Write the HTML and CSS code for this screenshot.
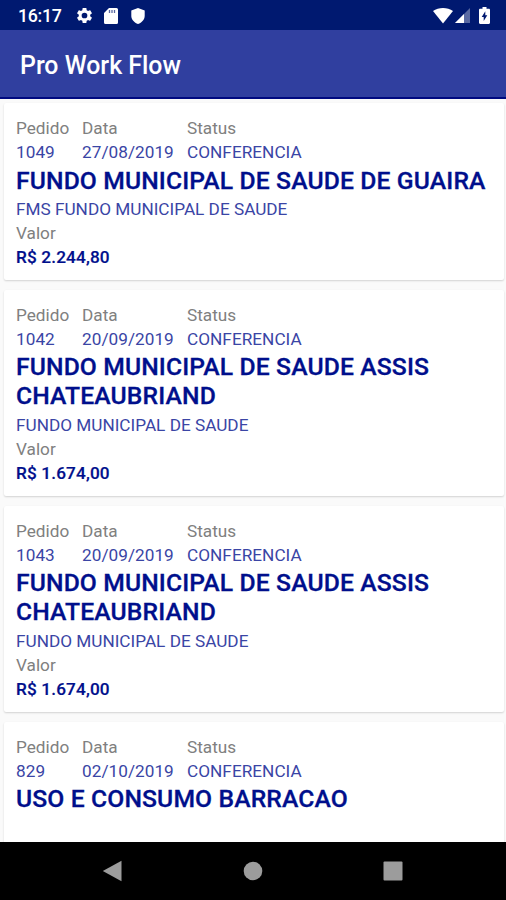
FILE: index.html
```html
<!DOCTYPE html>
<html lang="pt-BR">
<head>
    <meta charset="UTF-8">
    <meta name="viewport" content="width=device-width, initial-scale=1.0">
    <title>Pro Work Flow</title>
    <link rel="stylesheet" href="styles.css">
</head>
<body>

<!-- Status bar -->
<div class="status-bar">
    <span class="clock">16:17</span>
    <svg class="icon-gear" width="19" height="19" viewBox="0 0 24 24"><path fill="#fff" d="M19.14 12.94c.04-.3.06-.61.06-.94s-.02-.64-.07-.94l2.03-1.58c.18-.14.23-.41.12-.61l-1.92-3.32c-.12-.22-.37-.29-.59-.22l-2.39.96c-.5-.38-1.03-.7-1.62-.94l-.36-2.54c-.04-.24-.24-.41-.48-.41h-3.84c-.24 0-.43.17-.47.41l-.36 2.54c-.59.24-1.13.57-1.62.94l-2.39-.96c-.22-.08-.47 0-.59.22L2.74 8.87c-.12.21-.08.47.12.61l2.03 1.58c-.05.3-.09.63-.09.94s.02.64.07.94l-2.03 1.58c-.18.14-.23.41-.12.61l1.92 3.32c.12.22.37.29.59.22l2.39-.96c.5.38 1.03.7 1.62.94l.36 2.54c.05.24.24.41.48.41h3.84c.24 0 .44-.17.47-.41l.36-2.54c.59-.24 1.13-.56 1.62-.94l2.39.96c.22.08.47 0 .59-.22l1.92-3.32c.12-.22.07-.47-.12-.61zM12 15.6A3.6 3.6 0 1 1 12 8.4a3.6 3.6 0 0 1 0 7.2z"/></svg>
    <svg class="icon-sd" width="14" height="16" viewBox="0 0 14 16"><path fill="#fff" d="M5 0h7.500A1.500 1.500 0 0 1 14 1.500v13a1.500 1.500 0 0 1-1.500 1.500h-11A1.500 1.500 0 0 1 0 14.500V5z"/><path stroke="#001970" stroke-opacity=".65" stroke-width="1.300" d="M5.500 2v3M8 2v3M10.500 2v3"/></svg>
    <svg class="icon-shield" width="14" height="16" viewBox="0 0 14 16"><path fill="#fff" d="M7 0l6.700 2.500v5.200c0 3.800-2.900 7-6.700 8.300-3.800-1.300-6.700-4.500-6.700-8.300V2.500z"/></svg>
    <div class="status-right">
        <svg width="20" height="16" viewBox="0 0 20 16"><path fill="#fff" d="M10 15.500L0 3C5.500-1 14.500-1 20 3z"/></svg>
        <svg class="icon-signal" width="15" height="15" viewBox="0 0 15 15"><path fill="#fff" fill-opacity=".35" d="M15 0v15H0z"/><path fill="#fff" d="M9 6v9H0z"/></svg>
        <svg class="icon-battery" width="11" height="17" viewBox="0 0 11 17"><path fill="#fff" d="M3.500 0h4v1.700h2.300c.7 0 1.200.5 1.200 1.200v12.900c0 .7-.5 1.200-1.200 1.200H1.200C.5 17 0 16.500 0 15.800V2.900c0-.7.500-1.200 1.200-1.200h2.300z"/><path fill="#001970" d="M6.300 4.300v4h2L4.700 14V10h-2z"/></svg>
    </div>
</div>

<header>
    <h1>Pro Work Flow</h1>
</header>

<main>
    <div class="card">
        <div class="info">
            <div class="col-pedido"><label>Pedido</label><span>1049</span></div>
            <div class="col-data"><label>Data</label><span>27/08/2019</span></div>
            <div class="col-status"><label>Status</label><span>CONFERENCIA</span></div>
        </div>
        <h2>FUNDO MUNICIPAL DE SAUDE DE GUAIRA</h2>
        <p class="client">FMS FUNDO MUNICIPAL DE SAUDE</p>
        <label>Valor</label>
        <p class="price">R$ 2.244,80</p>
    </div>

    <div class="card">
        <div class="info">
            <div class="col-pedido"><label>Pedido</label><span>1042</span></div>
            <div class="col-data"><label>Data</label><span>20/09/2019</span></div>
            <div class="col-status"><label>Status</label><span>CONFERENCIA</span></div>
        </div>
        <h2>FUNDO MUNICIPAL DE SAUDE ASSIS CHATEAUBRIAND</h2>
        <p class="client">FUNDO MUNICIPAL DE SAUDE</p>
        <label>Valor</label>
        <p class="price">R$ 1.674,00</p>
    </div>

    <div class="card">
        <div class="info">
            <div class="col-pedido"><label>Pedido</label><span>1043</span></div>
            <div class="col-data"><label>Data</label><span>20/09/2019</span></div>
            <div class="col-status"><label>Status</label><span>CONFERENCIA</span></div>
        </div>
        <h2>FUNDO MUNICIPAL DE SAUDE ASSIS CHATEAUBRIAND</h2>
        <p class="client">FUNDO MUNICIPAL DE SAUDE</p>
        <label>Valor</label>
        <p class="price">R$ 1.674,00</p>
    </div>

    <div class="card card-last">
        <div class="info">
            <div class="col-pedido"><label>Pedido</label><span>829</span></div>
            <div class="col-data"><label>Data</label><span>02/10/2019</span></div>
            <div class="col-status"><label>Status</label><span>CONFERENCIA</span></div>
        </div>
        <h2>USO E CONSUMO BARRACAO</h2>
    </div>
</main>

<!-- Navigation buttons -->
<nav>
    <svg width="20" height="22" viewBox="0 0 20 22"><path fill="#9c9c9c" d="M19.500 .8v20.400L.8 11z"/></svg>
    <svg width="20" height="20" viewBox="0 0 20 20"><circle cx="10" cy="10" r="9.300" fill="#9c9c9c"/></svg>
    <svg width="20" height="20" viewBox="0 0 20 20"><rect x=".5" y=".5" width="19" height="19" rx="1" fill="#9c9c9c"/></svg>
</nav>

</body>
</html>
```

FILE: styles.css
```css
* {
    box-sizing: border-box;
}
body {
    font-family: Roboto, "Liberation Sans", sans-serif;
    margin: 0;
    height: 900px;
    display: flex;
    flex-direction: column;
    overflow: hidden;
    background-color: #fafafa;
}
h1, h2, p {
    margin: 0;
}
svg {
    display: block;
    flex: none;
}
.status-bar {
    height: 30px;
    flex: none;
    display: flex;
    align-items: center;
    padding: 1px 16px 0 18px;
    background-color: #001970;
    color: white;
}
.clock {
    width: 57px;
    font-size: 17.8px;
    font-weight: 500;
    letter-spacing: -0.3px;
}
.icon-sd {
    margin-left: 10px;
}
.icon-shield {
    margin-left: 13px;
}
.status-right {
    margin-left: auto;
    display: flex;
    align-items: center;
}
.icon-signal {
    margin-left: 2px;
}
.icon-battery {
    margin-left: 9px;
}
header {
    height: 69px;
    flex: none;
    display: flex;
    align-items: center;
    padding: 4px 20px 0;
    background-color: #303f9f;
    border-bottom: 2px solid #000a80;
    color: white;
}
h1 {
    font-size: 24.9px;
    font-weight: 500;
}
main {
    flex: 1;
    min-height: 0;
    overflow: hidden;
    padding: 4px 2px 0 4px;
}
.card {
    background: white;
    border-radius: 2px;
    padding: 13px 12px 11px;
    margin-bottom: 10px;
    box-shadow: 0 1px 2px rgba(0, 0, 0, 0.16);
}
.card-last {
    height: 160px;
}
.info {
    display: flex;
}
.col-pedido {
    width: 66px;
}
.col-data {
    width: 105px;
}
label, .info span, .client, .price {
    display: block;
    font-size: 17.2px;
    line-height: 24px;
}
label {
    color: #808080;
}
.info span, .client {
    color: #3a45a5;
}
.info span {
    letter-spacing: 0.03px;
}
h2 {
    font-size: 24.7px;
    line-height: 28.8px;
    font-weight: 500;
    letter-spacing: 0.12px;
    margin: 2.5px 0 1.7px;
    color: #000f8c;
    -webkit-text-stroke: 0.3px #000f8c;
}
.price {
    font-weight: 500;
    letter-spacing: 0.15px;
    color: #000f8c;
    -webkit-text-stroke: 0.2px #000f8c;
}
nav {
    height: 58px;
    flex: none;
    display: flex;
    align-items: center;
    justify-content: space-between;
    padding: 0 103px 0 102px;
    background-color: black;
}
```
